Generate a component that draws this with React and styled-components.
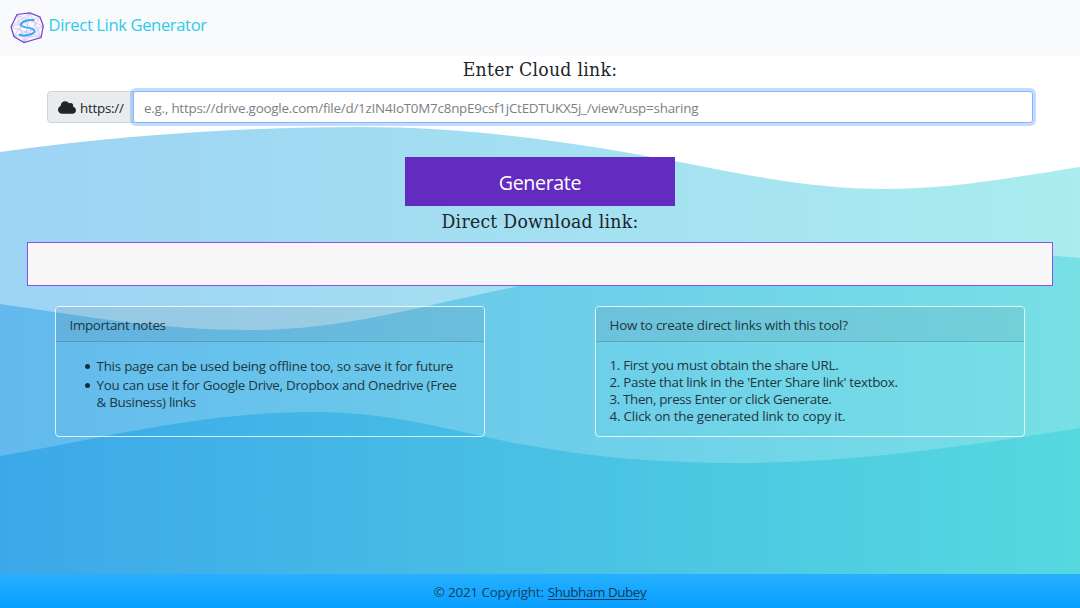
import React from "react";
import styled, { createGlobalStyle } from "styled-components";

const Global = createGlobalStyle`
  * { box-sizing: border-box; }
  html, body, #root { margin: 0; height: 100%; }
  body { font-family: "Open Sans", "Noto Sans", sans-serif; color: #212529; overflow: hidden; background: #fff; }
`;

const Page = styled.div`
  position: relative;
  isolation: isolate;
  width: 100%;
  height: 608px;
  display: flex;
  flex-direction: column;
`;

const Waves = styled.svg`
  position: absolute;
  inset: 0;
  z-index: -1;
  width: 100%;
  height: 100%;
`;

const Navbar = styled.nav`
  height: 56px;
  padding: 0 9.5px 1px;
  display: flex;
  align-items: center;
  gap: 4px;
  background: #f8fafc;
`;

const Logo = styled.svg`
  width: 35px;
  height: 32px;
  flex: none;
`;

const Brand = styled.a`
  font-size: 16.6px;
  line-height: 24px;
  letter-spacing: -0.38px;
  color: #2fcbea;
  padding-bottom: 6px;
  white-space: nowrap;
`;

const Main = styled.main`
  flex: 1;
  display: flex;
  flex-direction: column;
  align-items: center;
`;

const Heading = styled.h1`
  margin: 0;
  height: ${(p) => p.$height};
  padding-top: 1px;
  font: 400 19.2px/26px "DejaVu Serif Condensed", "DejaVu Serif", serif;
  font-stretch: condensed;
  letter-spacing: 0.28px;
  white-space: nowrap;
`;

const InputGroup = styled.div`
  width: 986px;
  height: 32px;
  display: flex;
`;

const Prefix = styled.span`
  width: 87px;
  display: flex;
  align-items: center;
  gap: 4px;
  padding: 1px 0 0 10px;
  border: 1px solid #ced4da;
  border-radius: 4px 0 0 4px;
  background: #e9ecef;
  font-size: 13.4px;
  letter-spacing: -0.25px;
  white-space: nowrap;
`;

const Field = styled.input`
  flex: 1;
  min-width: 0;
  margin-left: -1px;
  padding: 1px 10px 0;
  border: 1px solid #86b7fe;
  border-radius: 3px;
  outline: 0;
  background: #fff;
  box-shadow: 0 0 0 3px rgba(13, 110, 253, 0.25);
  font: 13.4px "Open Sans", sans-serif;
  letter-spacing: -0.23px;
  &::placeholder { color: #7b8086; opacity: 1; }
`;

const GenerateButton = styled.button`
  width: 270px;
  height: 49px;
  margin: 34px 0 2px;
  padding: 2px 0 0;
  border: 0;
  background: #642bc0;
  color: #fff;
  font: 19.6px "Open Sans", sans-serif;
  letter-spacing: -0.35px;
`;

const Output = styled.div`
  width: 1026px;
  height: 44px;
  border: 1px solid #924fe8;
  background: #f7f7f7;
`;

const Cards = styled.div`
  width: 970px;
  margin-top: 20px;
  display: flex;
  justify-content: space-between;
`;

const Card = styled.section`
  width: 430px;
  height: 131px;
  border: 1px solid rgba(255, 255, 255, 0.78);
  border-radius: 4px;
  font-size: 13.4px;
  line-height: 17px;
  color: #21373f;
`;

const CardHeader = styled.header`
  height: 35px;
  padding: 10px 13.5px 0;
  border-bottom: 1px solid rgba(0, 0, 0, 0.14);
  background: rgba(100, 110, 120, 0.12);
  letter-spacing: ${(p) => p.$track};
  white-space: nowrap;
`;

const Item = styled.li`
  letter-spacing: ${(p) => p.$track};
  white-space: nowrap;
`;

const Notes = styled.ul`
  margin: 0;
  padding: 16px 20px 0 40.5px;
  display: grid;
  row-gap: 1.5px;
  list-style: none;

  ${Item}::before {
    content: "";
    display: inline-block;
    width: 5px;
    height: 5px;
    margin: 0 7px 2px -12px;
    border-radius: 50%;
    background: #182c35;
  }
`;

const Steps = styled.ol`
  margin: 0;
  padding: 15px 13.5px 0;
  list-style-position: inside;
`;

const Footer = styled.footer`
  height: 34px;
  display: flex;
  align-items: center;
  justify-content: center;
  padding-top: 1px;
  gap: 4px;
  background: linear-gradient(#27b0ff, #079eff);
  font-size: 13.4px;
  letter-spacing: -0.16px;
  color: #16425d;
  a { color: #123c58; letter-spacing: -0.42px; text-decoration: underline; text-underline-offset: 2px; }
`;

export default function App() {
  return (
    <Page>
      <Global />
      <Waves viewBox="0 0 1080 608" preserveAspectRatio="none" aria-hidden="true">
        <defs>
          <linearGradient id="sea" gradientUnits="userSpaceOnUse" x1="0" y1="0" x2="1080" y2="0">
            <stop offset="0" stopColor="#3ca8e9" />
            <stop offset="1" stopColor="#55d9df" />
          </linearGradient>
        </defs>
        <g fill="url(#sea)">
          <path fillOpacity=".5" d="M0 152C130 134 250 127 360 127C480 127 590 145 690 164C760 178 820 189 885 189C950 189 1010 178 1080 167V608H0Z" />
          <path fillOpacity=".6" d="M0 304C90 317 160 330 250 330C340 330 410 309 500 290C600 269 680 253 800 249C900 246 1000 250 1080 258V608H0Z" />
          <path d="M0 456C105 438 200 412 315 412C395 412 455 432 520 444C590 457 660 463 740 463C850 463 970 446 1080 428V608H0Z" />
        </g>
      </Waves>
      <Navbar>
        <Logo viewBox="0 0 35 32" fill="none" aria-hidden="true">
          <g stroke="#c3b0f0" strokeWidth=".6">
            <path d="M7 3L31 25L4 24L20 1L31 25L1 15L20 1L14 30L7 3L33 14L4 24M1 15L30 5L14 30L33 14" />
          </g>
          <path d="M7 2.5L20 1L30 5L33.3 14L31 25.5L14 30.5L4 24.5L1 15Z" stroke="#7743d2" strokeWidth="1.25" />
          <path d="M24.500 8.200C17.500 7.500 11.500 9.500 10.800 12.500C10.200 16.200 24 15 24.500 18.800C24.200 22.500 15 24.500 9 22.800" stroke="#3aa9ef" strokeWidth="2" />
        </Logo>
        <Brand>Direct Link Generator</Brand>
      </Navbar>
      <Main>
        <Heading $height="35px">Enter Cloud link:</Heading>
        <InputGroup>
          <Prefix>
            <svg width="18" height="13" viewBox="0 0 640 448" fill="#212529" aria-hidden="true">
              <path d="M537.6 194.6c4-10.700 6.400-22.400 6.400-34.600 0-53-43-96-96-96-19.700 0-38.100 6-53.300 16.200C367 32.200 315.300 0 256 0 167.600 0 96 71.600 96 160c0 2.700.1 5.400.2 8.100C40.200 187.800 0 241.200 0 304c0 79.500 64.500 144 144 144h368c70.700 0 128-57.300 128-128 0-61.900-44-113.600-102.400-125.400z" />
            </svg>
            https://
          </Prefix>
          <Field placeholder="e.g., https://drive.google.com/file/d/1zIN4IoT0M7c8npE9csf1jCtEDTUKX5j_/view?usp=sharing" />
        </InputGroup>
        <GenerateButton>Generate</GenerateButton>
        <Heading $height="34px">Direct Download link:</Heading>
        <Output />
        <Cards>
          <Card>
            <CardHeader $track="-0.36px">Important notes</CardHeader>
            <Notes>
              <Item $track="-0.24px">This page can be used being offline too, so save it for future</Item>
              <Item $track="-0.28px">You can use it for Google Drive, Dropbox and Onedrive (Free<br />&amp; Business) links</Item>
            </Notes>
          </Card>
          <Card>
            <CardHeader $track="-0.24px">How to create direct links with this tool?</CardHeader>
            <Steps>
              <Item $track="-0.32px">First you must obtain the share URL.</Item>
              <Item $track="-0.3px">Paste that link in the 'Enter Share link' textbox.</Item>
              <Item $track="-0.36px">Then, press Enter or click Generate.</Item>
              <Item $track="-0.2px">Click on the generated link to copy it.</Item>
            </Steps>
          </Card>
        </Cards>
      </Main>
      <Footer>
        © 2021 Copyright: <a>Shubham Dubey</a>
      </Footer>
    </Page>
  );
}
